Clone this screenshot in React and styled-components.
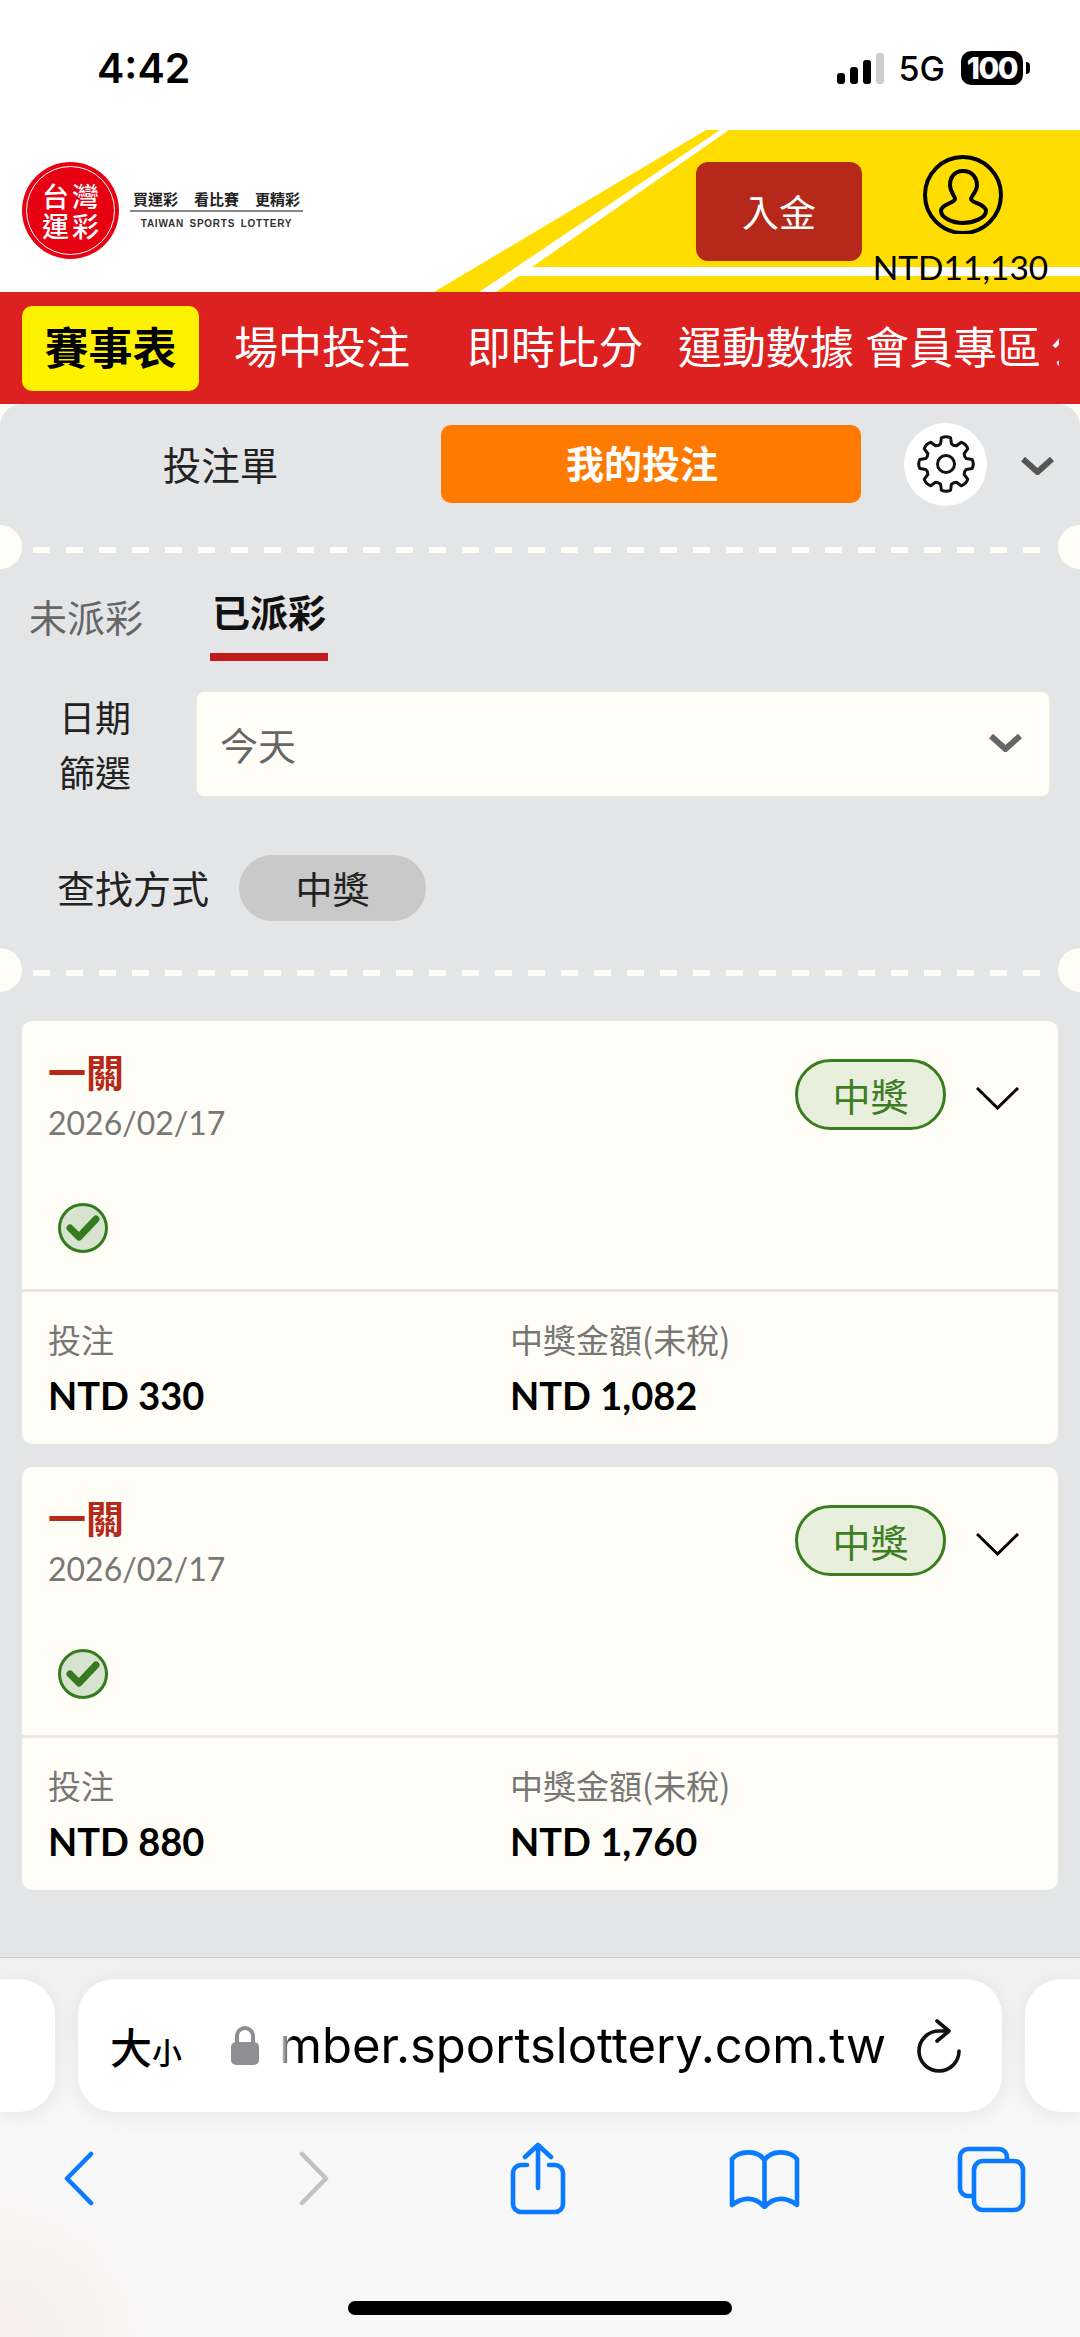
import styled, { createGlobalStyle } from "styled-components";

const CJK = `"Noto Sans CJK TC", "Noto Sans", sans-serif`;
const LATIN = `Lato, "Noto Sans CJK TC", sans-serif`;

const navItems = [
  { label: "場中投注", gap: 35 },
  { label: "即時比分", gap: 57 },
  { label: "運動數據", gap: 35 },
  { label: "會員專區", gap: 11 },
  { label: "公告", gap: 10 },
];

const bets = [
  { id: 1, date: "2026/02/17", stake: "NTD 330", prize: "NTD 1,082" },
  { id: 2, date: "2026/02/17", stake: "NTD 880", prize: "NTD 1,760" },
];

// 8 teeth, first one pointing straight up
const gearPath = () => {
  const point = (r, deg) => {
    const a = ((deg - 90) * Math.PI) / 180;
    return `${(30 + r * Math.cos(a)).toFixed(2)} ${(30 + r * Math.sin(a)).toFixed(2)}`;
  };
  let d = "";
  for (let i = 0; i < 8; i++) {
    const c = i * 45;
    d += `${i === 0 ? "M" : "L"}${point(26.5, c - 10)} `;
    d += `Q${point(28.5, c)} ${point(26.5, c + 10)} `;
    d += `L${point(21, c + 15)} Q${point(19.5, c + 22.5)} ${point(21, c + 30)} `;
    d = d.trimEnd() + ` L${point(26.5, c + 35)} `;
  }
  return d + "Z";
};

const App = () => {
  return (
    <>
      <GlobalStyle />
      <Page>
        <StatusBar>
          <Clock>4:42</Clock>
          <StatusIcons>
            <svg width="47" height="31" viewBox="0 0 47 31">
              <rect x="0" y="20" width="8" height="11" rx="3" fill="#000" />
              <rect x="13" y="14" width="8" height="17" rx="3" fill="#000" />
              <rect x="26" y="7" width="8" height="24" rx="3" fill="#000" />
              <rect x="39" y="0" width="8" height="31" rx="3" fill="#ccc" />
            </svg>
            <Network>5G</Network>
            <Battery>100</Battery>
          </StatusIcons>
        </StatusBar>

        <Header>
          <HeaderArt viewBox="0 0 1080 162" preserveAspectRatio="none">
            <polygon points="706,0 720,0 479,162 434,162" fill="#ffdd00" />
            <polygon points="729,0 1080,0 1080,137 532,137" fill="#ffdd00" />
            <polygon points="519,146 1080,146 1080,162 496,162" fill="#ffdd00" />
          </HeaderArt>
          <Logo>
            <LogoMark>
              <span>台</span>
              <span>灣</span>
              <span>運</span>
              <span>彩</span>
            </LogoMark>
            <LogoText>
              <Tagline>
                <span>買運彩</span>
                <span>看比賽</span>
                <span>更精彩</span>
              </Tagline>
              <LogoEnglish>TAIWAN SPORTS LOTTERY</LogoEnglish>
            </LogoText>
          </Logo>
          <HeaderActions>
            <DepositButton>入金</DepositButton>
            <Account>
              <AvatarIcon width="80" height="80" viewBox="0 0 80 80" fill="none" stroke="#000" strokeWidth="4">
                <circle cx="40" cy="41" r="38" />
                <path d="M40 17 C30 17 27 25 27 31 C27 38 32 42 32 45 C32 49 18 50 18 57 C18 64 30 69 40 69 C50 69 63 64 63 57 C63 50 48 49 48 45 C48 42 54 38 54 31 C54 25 50 17 40 17 Z" />
              </AvatarIcon>
              <Balance>NTD11,130</Balance>
            </Account>
          </HeaderActions>
        </Header>

        <Nav>
          <NavActive>賽事表</NavActive>
          <NavTrack>
            {navItems.map((item) => (
              <NavLink key={item.label} $gap={item.gap}>
                {item.label}
              </NavLink>
            ))}
          </NavTrack>
        </Nav>

        <Panel>
          <SlipTabs>
            <SlipTab>投注單</SlipTab>
            <SlipTabActive>我的投注</SlipTabActive>
            <GearButton>
              <svg width="60" height="60" viewBox="0 0 60 60" fill="none" stroke="#111" strokeWidth="3" strokeLinejoin="round">
                <path d={gearPath()} />
                <circle cx="30" cy="30" r="8.5" />
              </svg>
            </GearButton>
            <PanelChevron width="33" height="18" viewBox="0 0 33 18" fill="none" stroke="#555" strokeWidth="6">
              <path d="M2 2 L16.5 15 L31 2" />
            </PanelChevron>
          </SlipTabs>

          <Perforation $top={41} />

          <PayoutTabs>
            <PayoutTab>未派彩</PayoutTab>
            <PayoutTab $active>已派彩</PayoutTab>
          </PayoutTabs>

          <FilterRow>
            <FilterLabel>日期 篩選</FilterLabel>
            <SelectBox>
              今天
              <svg width="33" height="18" viewBox="0 0 33 18" fill="none" stroke="#666" strokeWidth="6">
                <path d="M2 2 L16.5 15 L31 2" />
              </svg>
            </SelectBox>
          </FilterRow>

          <SearchRow>
            <SearchLabel>查找方式</SearchLabel>
            <SearchPill>中獎</SearchPill>
          </SearchRow>

          <Perforation $top={49} />

          <CardList>
            {bets.map((bet) => (
              <BetCard key={bet.id}>
                <CardTop>
                  <CardHead>
                    <div>
                      <BetType>一關</BetType>
                      <BetDate>{bet.date}</BetDate>
                    </div>
                    <CardStatus>
                      <WinBadge>中獎</WinBadge>
                      <svg width="43" height="23" viewBox="0 0 43 23" fill="none" stroke="#000" strokeWidth="3">
                        <path d="M1 1 L21.5 21 L42 1" />
                      </svg>
                    </CardStatus>
                  </CardHead>
                  <CheckIcon width="50" height="50" viewBox="0 0 50 50">
                    <circle cx="25" cy="25" r="23.5" fill="#d5e3cf" stroke="#367a1f" strokeWidth="3" />
                    <path d="M12 25 L21 34 L38 16" fill="none" stroke="#367a1f" strokeWidth="7" strokeLinecap="round" strokeLinejoin="round" />
                  </CheckIcon>
                </CardTop>
                <CardBottom>
                  <div>
                    <AmountLabel>投注</AmountLabel>
                    <AmountValue>{bet.stake}</AmountValue>
                  </div>
                  <div>
                    <AmountLabel>中獎金額(未稅)</AmountLabel>
                    <AmountValue>{bet.prize}</AmountValue>
                  </div>
                </CardBottom>
              </BetCard>
            ))}
          </CardList>
        </Panel>

        <Toolbar>
          <TabStrip>
            <TabStub $side="left" />
            <UrlBar>
              <TextSize>
                大<small>小</small>
              </TextSize>
              <svg width="28" height="39" viewBox="0 0 28 39">
                <path d="M6 18 V10 a8 8 0 0 1 16 0 V18" fill="none" stroke="#8e8e93" strokeWidth="4" />
                <rect x="0" y="16" width="28" height="23" rx="5" fill="#8e8e93" />
              </svg>
              <UrlText>mber.sportslottery.com.tw</UrlText>
              <svg width="46" height="54" viewBox="0 0 46 54" fill="none" stroke="#111" strokeWidth="3.6" strokeLinecap="round" strokeLinejoin="round">
                <path d="M21 2 L33 12 L21 22" />
                <path d="M32 12 H23 A20 20 0 1 0 43 32" />
              </svg>
            </UrlBar>
            <TabStub $side="right" />
          </TabStrip>

          <ToolIcons>
            <ToolIcon $gap={0} width="31" height="55" viewBox="0 0 31 55" stroke="#0a7aff">
              <path d="M28 3 L4 27.5 L28 52" />
            </ToolIcon>
            <ToolIcon $gap={205} width="31" height="55" viewBox="0 0 31 55" stroke="#c2c2c2">
              <path d="M3 3 L27 27.5 L3 52" />
            </ToolIcon>
            <ToolIcon $gap={180} width="56" height="73" viewBox="0 0 56 73" stroke="#0a7aff">
              <path d="M17 23 H11 a8 8 0 0 0 -8 8 V62 a8 8 0 0 0 8 8 H45 a8 8 0 0 0 8 -8 V31 a8 8 0 0 0 -8 -8 H39" />
              <path d="M28 3 V46 M15 15 L28 3 L41 15" />
            </ToolIcon>
            <ToolIcon $gap={163} width="71" height="60" viewBox="0 0 71 60" stroke="#0a7aff">
              <path d="M3 10 C10 2 28 0 35.5 11 C43 0 61 2 68 10 V56 C58 48 45 47 35.5 58 C26 47 13 48 3 56 Z M35.5 11 V56" />
            </ToolIcon>
            <ToolIcon $gap={157} width="69" height="68" viewBox="0 0 69 68" stroke="#0a7aff">
              <path d="M50 15 V12 a8 8 0 0 0 -8 -8 H11 a8 8 0 0 0 -8 8 V43 a8 8 0 0 0 8 8 H16" />
              <rect x="17" y="16" width="49" height="49" rx="9" />
            </ToolIcon>
          </ToolIcons>

          <HomeIndicator />
        </Toolbar>
      </Page>
    </>
  );
};

const GlobalStyle = createGlobalStyle`
  html, body {
    margin: 0;
    padding: 0;
    background: #fff;
  }
  * {
    box-sizing: border-box;
  }
`;

const Page = styled.div`
  display: flex;
  flex-direction: column;
  width: 1080px;
  height: 2337px;
  overflow: hidden;
  background: #fffef6;
  font-family: ${CJK};
`;

const StatusBar = styled.div`
  display: flex;
  justify-content: space-between;
  align-items: center;
  height: 130px;
  padding: 6px 50px 0 97px;
  background: #fff;
`;

const Clock = styled.div`
  font-family: Inter, sans-serif;
  font-size: 41px;
  font-weight: 600;
  color: #000;
`;

const StatusIcons = styled.div`
  display: flex;
  align-items: center;
`;

const Network = styled.div`
  margin-left: 15px;
  font-family: Inter, sans-serif;
  font-size: 34px;
  font-weight: 500;
  color: #000;
`;

const Battery = styled.div`
  position: relative;
  display: flex;
  justify-content: center;
  align-items: center;
  width: 62px;
  height: 34px;
  margin-left: 16px;
  margin-right: 7px;
  border-radius: 10px;
  background: #000;
  color: #fff;
  font-family: Inter, sans-serif;
  font-size: 30px;
  font-weight: 800;
  letter-spacing: -1.5px;

  &::after {
    content: "";
    position: absolute;
    right: -7px;
    top: 11px;
    width: 4px;
    height: 12px;
    border-radius: 0 4px 4px 0;
    background: #000;
  }
`;

const Header = styled.div`
  position: relative;
  display: flex;
  height: 162px;
  background: #fff;
`;

const HeaderArt = styled.svg`
  position: absolute;
  left: 0;
  top: 0;
  width: 1080px;
  height: 162px;
`;

const Logo = styled.div`
  position: relative;
  display: flex;
  align-items: center;
  gap: 11px;
  height: 97px;
  margin: 32px 0 0 22px;
`;

const LogoMark = styled.div`
  position: relative;
  display: grid;
  grid-template-columns: 30px 30px;
  grid-auto-rows: 30px;
  place-content: center;
  width: 97px;
  height: 97px;
  border-radius: 50%;
  background: #e60012;
  color: #fff;
  font-size: 27px;
  font-weight: 500;
  line-height: 30px;
  text-align: center;

  &::before {
    content: "";
    position: absolute;
    inset: 4px;
    border: 1.5px solid #fff;
    border-radius: 50%;
  }
`;

const LogoText = styled.div`
  width: 173px;
  margin-bottom: 3px;
`;

const Tagline = styled.div`
  display: flex;
  justify-content: space-between;
  padding: 0 3px;
  border-bottom: 2px solid #888;
  color: #222;
  font-size: 15px;
  font-weight: 700;
  line-height: 22px;
`;

const LogoEnglish = styled.div`
  margin-top: 5px;
  color: #333;
  font-family: "Liberation Sans", sans-serif;
  font-size: 10px;
  font-weight: 700;
  letter-spacing: 0.75px;
  word-spacing: 2px;
  line-height: 14px;
  text-align: center;
`;

const HeaderActions = styled.div`
  position: relative;
  display: flex;
  gap: 13px;
  margin-left: auto;
  padding-right: 34px;
`;

const DepositButton = styled.div`
  display: flex;
  justify-content: center;
  align-items: center;
  width: 166px;
  height: 99px;
  margin-top: 32px;
  padding-bottom: 2px;
  border-radius: 12px;
  background: #b5281a;
  color: #fff;
  font-size: 37px;
`;

const Account = styled.div`
  display: flex;
  flex-direction: column;
  align-items: center;
  width: 171px;
  padding-top: 24px;
`;

const AvatarIcon = styled.svg`
  margin-left: 5px;
`;

const Balance = styled.div`
  margin-top: 13px;
  color: #000;
  font-family: ${LATIN};
  font-size: 33.5px;
  line-height: 40px;
  white-space: nowrap;
`;

const Nav = styled.div`
  display: flex;
  align-items: center;
  height: 112px;
  padding-left: 22px;
  background: #dd2020;
`;

const NavActive = styled.div`
  flex: none;
  display: flex;
  justify-content: center;
  align-items: center;
  width: 177px;
  height: 85px;
  padding-bottom: 4px;
  border-radius: 10px;
  background: #fff200;
  color: #000;
  font-size: 44px;
  font-weight: 700;
`;

const NavTrack = styled.div`
  display: flex;
  width: 860px;
  padding-bottom: 6px;
  overflow: hidden;
`;

const NavLink = styled.div`
  flex: none;
  margin-left: ${(p) => p.$gap}px;
  color: #fff;
  font-size: 44px;
  white-space: nowrap;
`;

const Panel = styled.div`
  flex: 1;
  padding-top: 18px;
  border-radius: 22px 22px 0 0;
  background: #e4e5e7;
`;

const SlipTabs = styled.div`
  display: flex;
  align-items: center;
  height: 84px;
`;

const SlipTab = styled.div`
  width: 441px;
  padding-bottom: 3px;
  color: #222;
  font-size: 38.5px;
  text-align: center;
`;

const SlipTabActive = styled.div`
  display: flex;
  justify-content: center;
  align-items: center;
  width: 420px;
  height: 78px;
  padding: 0 18px 6px 0;
  border-radius: 10px;
  background: #ff7a00;
  color: #fff;
  font-size: 38px;
  font-weight: 700;
`;

const GearButton = styled.div`
  display: flex;
  justify-content: center;
  align-items: center;
  width: 83px;
  height: 83px;
  margin-left: 43px;
  border-radius: 50%;
  background: #fff;
`;

const PanelChevron = styled.svg`
  margin: 3px 0 0 34px;
`;

const Perforation = styled.div`
  position: relative;
  height: 6px;
  margin: ${(p) => p.$top}px 33px 0;
  background: repeating-linear-gradient(90deg, #fffef6 0 17px, transparent 17px 33px);

  &::before,
  &::after {
    content: "";
    position: absolute;
    top: -22px;
    width: 44px;
    height: 44px;
    border-radius: 50%;
    background: #fffef6;
  }
  &::before {
    left: -55px;
  }
  &::after {
    right: -55px;
  }
`;

const PayoutTabs = styled.div`
  display: flex;
  align-items: flex-start;
  gap: 67px;
  margin-top: 33px;
  padding-left: 29px;
`;

const PayoutTab = styled.div`
  margin-top: ${(p) => (p.$active ? 0 : 5)}px;
  padding: 0 ${(p) => (p.$active ? 2 : 0)}px ${(p) => (p.$active ? 17 : 0)}px;
  border-bottom: ${(p) => (p.$active ? "8px solid #c01a1a" : "none")};
  color: ${(p) => (p.$active ? "#111" : "#666")};
  font-size: 38px;
  font-weight: ${(p) => (p.$active ? 700 : 400)};
  line-height: 50px;
`;

const FilterRow = styled.div`
  display: flex;
  align-items: center;
  gap: 63px;
  height: 106px;
  margin-top: 30px;
  padding: 0 30px 0 57px;
`;

const FilterLabel = styled.div`
  width: 76px;
  color: #222;
  font-size: 36px;
  line-height: 55px;
  text-align: center;
`;

const SelectBox = styled.div`
  flex: 1;
  display: flex;
  justify-content: space-between;
  align-items: center;
  height: 106px;
  padding: 0 27px 2px 23px;
  border: 1.5px solid #ece9dd;
  border-radius: 8px;
  background: #fffef6;
  color: #666;
  font-size: 38px;
`;

const SearchRow = styled.div`
  display: flex;
  align-items: center;
  gap: 30px;
  margin-top: 58px;
  padding-left: 57px;
`;

const SearchLabel = styled.div`
  margin-bottom: 3px;
  color: #222;
  font-size: 38px;
`;

const SearchPill = styled.div`
  display: flex;
  justify-content: center;
  align-items: center;
  width: 187px;
  height: 66px;
  border-radius: 33px;
  background: #c9c9c9;
  color: #222;
  font-size: 37px;
`;

const CardList = styled.div`
  display: flex;
  flex-direction: column;
  gap: 23px;
  margin: 45px 22px 0;
`;

const BetCard = styled.div`
  height: 423px;
  border-radius: 10px;
  background: #fffef6;
`;

const CardTop = styled.div`
  height: 271px;
  padding: 25px 39px 0 26px;
  border-bottom: 3px solid #e9e7e0;
`;

const CardHead = styled.div`
  display: flex;
  justify-content: space-between;
  align-items: flex-start;
`;

const BetType = styled.div`
  color: #b5281a;
  font-size: 38px;
  font-weight: 700;
  line-height: 50px;
`;

const BetDate = styled.div`
  margin-top: 2px;
  color: #777;
  font-family: ${LATIN};
  font-size: 32px;
  line-height: 50px;
`;

const CardStatus = styled.div`
  display: flex;
  align-items: center;
  gap: 30px;
  margin-top: 13px;

  svg {
    margin-top: 7px;
  }
`;

const WinBadge = styled.div`
  display: flex;
  justify-content: center;
  align-items: center;
  width: 151px;
  height: 71px;
  border: 3px solid #3a7d1e;
  border-radius: 36px;
  background: #e8efdc;
  color: #3f7d22;
  font-size: 38px;
`;

const CheckIcon = styled.svg`
  display: block;
  margin: 55px 0 0 10px;
`;

const CardBottom = styled.div`
  display: grid;
  grid-template-columns: 462px 1fr;
  padding: 25px 0 0 26px;
`;

const AmountLabel = styled.div`
  color: #777;
  font-size: 33px;
  line-height: 44px;
`;

const AmountValue = styled.div`
  margin-top: 9px;
  color: #000;
  font-family: ${LATIN};
  font-size: 38px;
  font-weight: 700;
  line-height: 50px;
`;

const Toolbar = styled.div`
  height: 380px;
  padding-top: 21px;
  border-top: 1px solid #cfcfd1;
  background: radial-gradient(circle at 0 100%, rgba(250, 225, 225, 0.45), transparent 170px),
    linear-gradient(#f0f0f0, #f8f8f8 45%, #f7f7f7);
`;

const TabStrip = styled.div`
  display: flex;
  gap: 23px;
  height: 133px;
`;

const TabStub = styled.div`
  width: 55px;
  border-radius: ${(p) => (p.$side === "left" ? "0 36px 36px 0" : "36px 0 0 36px")};
  background: #fff;
  box-shadow: 0 4px 24px rgba(0, 0, 0, 0.07);
`;

const UrlBar = styled.div`
  display: flex;
  align-items: center;
  width: 924px;
  padding-left: 32px;
  border-radius: 36px;
  background: #fff;
  box-shadow: 0 4px 24px rgba(0, 0, 0, 0.07);
`;

const TextSize = styled.div`
  width: 121px;
  color: #000;
  font-size: 42px;
  font-weight: 500;
  white-space: nowrap;

  small {
    font-size: 30px;
  }
`;

const UrlText = styled.div`
  width: 606px;
  margin: 0 31px 0 20px;
  overflow: hidden;
  color: #000;
  font-family: Inter, sans-serif;
  font-size: 49px;
  white-space: nowrap;
  -webkit-mask-image: linear-gradient(90deg, transparent, #000 14px);
  mask-image: linear-gradient(90deg, transparent, #000 14px);
`;

const ToolIcons = styled.div`
  display: flex;
  align-items: center;
  height: 73px;
  margin-top: 30px;
  padding-left: 63px;
`;

const ToolIcon = styled.svg`
  flex: none;
  margin-left: ${(p) => p.$gap}px;
  fill: none;
  stroke-width: 4.6px;
  stroke-linecap: round;
  stroke-linejoin: round;
`;

const HomeIndicator = styled.div`
  width: 384px;
  height: 14px;
  margin: 86px auto 0;
  border-radius: 7px;
  background: #000;
`;

export default App;
